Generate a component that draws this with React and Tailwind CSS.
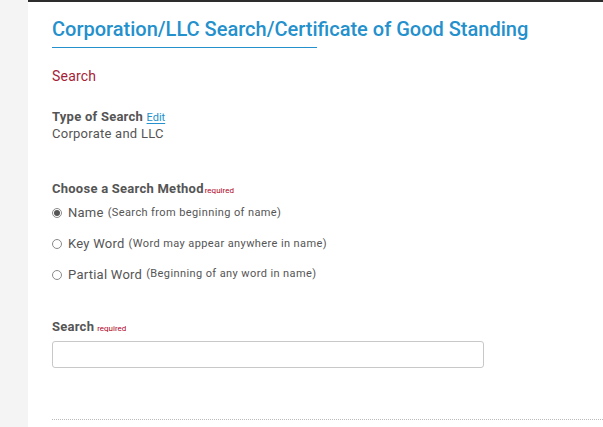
import React from "react";

function Radio({ checked }) {
  return (
    <span className="w-[10px] h-[10px] rounded-full border border-[#8a8a8a] bg-white mr-[6px] shrink-0 flex items-center justify-center">
      {checked && <span className="block w-[6px] h-[6px] rounded-full bg-[#555]" />}
    </span>
  );
}

export default function App() {
  return (
    <div className="flex w-[603px] h-[427px] overflow-hidden bg-white" style={{ fontFamily: "Roboto, 'Liberation Sans', sans-serif" }}>
      <aside className="w-[28px] shrink-0 bg-[#f4f4f4]" />
      <main className="flex-1 border-t-[2px] border-[#2d2d2d] pl-[24px] pt-[14px]">
        <h1 className="text-[20px] leading-[26px] font-medium text-[#2490cc]">
          Corporation/LLC Search/Certificate of Good Standing
        </h1>
        <div className="w-[265px] h-[1px] bg-[#2490cc] mt-[5px]" />
        <div className="mt-[19px] text-[14px] leading-[18px] text-[#a51d36] tracking-[0.2px]">Search</div>

        <div className="mt-[23px] text-[13px] leading-[17px] text-[#555] tracking-[0.25px]">
          <span className="font-bold">Type of Search</span>{" "}
          <span className="text-[11px] text-[#2490cc] underline underline-offset-2 tracking-normal">Edit</span>
        </div>
        <div className="text-[13px] leading-[16px] text-[#555] tracking-[0.25px]">Corporate and LLC</div>

        <div className="mt-[38px] text-[13px] leading-[17px] text-[#555] tracking-[0.25px]">
          <span className="font-bold">Choose a Search Method</span>
          <span className="text-[8px] text-[#b0001e] ml-[1px] tracking-normal">required</span>
        </div>

        <div className="mt-[5px] flex flex-col gap-[13px] text-[#555]">
          <label className="flex items-center h-[18px]">
            <Radio checked />
            <span className="text-[13px] tracking-[0.25px]">Name</span>
            <span className="text-[11px] ml-[4px] tracking-[0.4px]">(Search from beginning of name)</span>
          </label>
          <label className="flex items-center h-[18px]">
            <Radio />
            <span className="text-[13px] tracking-[0.25px]">Key Word</span>
            <span className="text-[11px] ml-[4px] tracking-[0.4px]">(Word may appear anywhere in name)</span>
          </label>
          <label className="flex items-center h-[17px]">
            <Radio />
            <span className="text-[13px] tracking-[0.25px]">Partial Word</span>
            <span className="text-[11px] ml-[4px] tracking-[0.4px]">(Beginning of any word in name)</span>
          </label>
        </div>

        <div className="mt-[35px] text-[13px] leading-[17px] text-[#555] tracking-[0.25px]">
          <span className="font-bold">Search</span>
          <span className="text-[8px] text-[#b0001e] ml-[3px] tracking-normal">required</span>
        </div>
        <input type="text" className="mt-[4px] block w-[432px] h-[27px] border border-[#c8c8c8] rounded-[3px] bg-white" />

        <div className="mt-[51px] border-t border-dotted border-[#bbb]" />
      </main>
    </div>
  );
}
